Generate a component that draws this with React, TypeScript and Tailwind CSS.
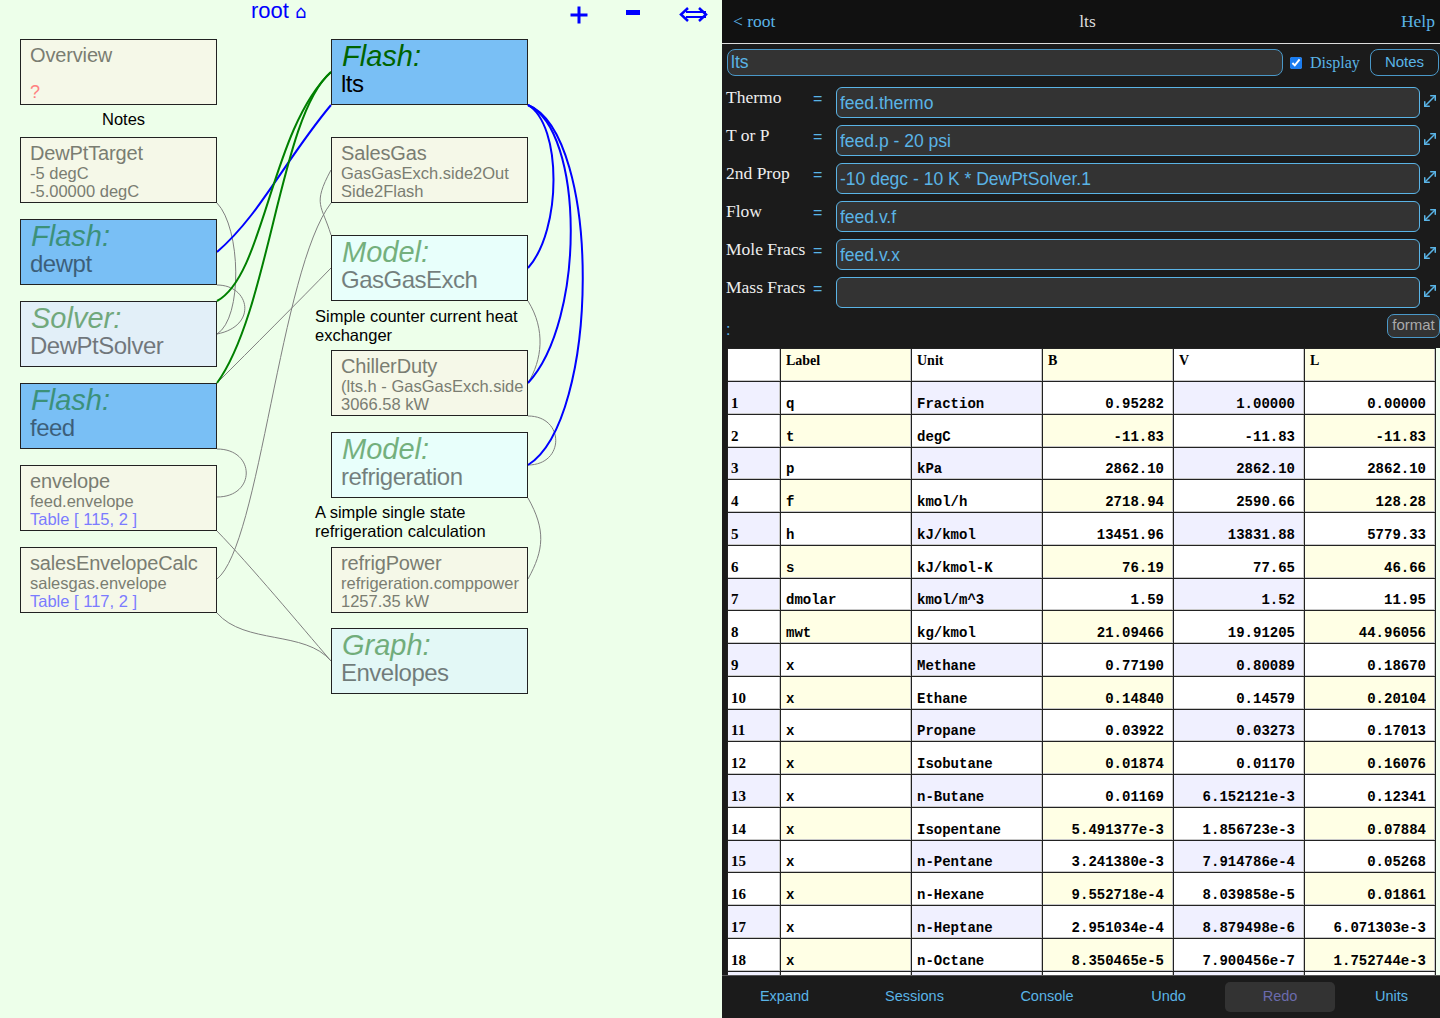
import { MoveDiagonal } from "lucide-react";

const sans = "font-['Liberation_Sans',Arial,sans-serif]";

type Kind = "note" | "flash" | "solver" | "model" | "graph";

const kindBg: Record<Kind, string> = {
  note: "bg-[#f5f8e8]",
  flash: "bg-[#79bff5]",
  solver: "bg-[#e2eff8]",
  model: "bg-[#e8fffb]",
  graph: "bg-[#e3f8f6]",
};

const expressionNodes = [
  { pos: "left-[20px] top-[137px]", name: "DewPtTarget", lines: ["-5 degC", "-5.00000 degC"] },
  { pos: "left-[20px] top-[465px]", name: "envelope", lines: ["feed.envelope"], table: "Table [ 115, 2 ]" },
  { pos: "left-[20px] top-[547px]", name: "salesEnvelopeCalc", lines: ["salesgas.envelope"], table: "Table [ 117, 2 ]" },
  { pos: "left-[331px] top-[137px]", name: "SalesGas", lines: ["GasGasExch.side2Out", "Side2Flash"] },
  { pos: "left-[331px] top-[350px]", name: "ChillerDuty", lines: ["(lts.h - GasGasExch.side", "3066.58 kW"] },
  { pos: "left-[331px] top-[547px]", name: "refrigPower", lines: ["refrigeration.comppower", "1257.35 kW"] },
];

const toolNodes: { pos: string; kind: Kind; label: string; name: string; selected?: boolean }[] = [
  { pos: "left-[20px] top-[219px]", kind: "flash", label: "Flash:", name: "dewpt" },
  { pos: "left-[20px] top-[301px]", kind: "solver", label: "Solver:", name: "DewPtSolver" },
  { pos: "left-[20px] top-[383px]", kind: "flash", label: "Flash:", name: "feed" },
  { pos: "left-[331px] top-[39px]", kind: "flash", label: "Flash:", name: "lts", selected: true },
  { pos: "left-[331px] top-[235px]", kind: "model", label: "Model:", name: "GasGasExch" },
  { pos: "left-[331px] top-[432px]", kind: "model", label: "Model:", name: "refrigeration" },
  { pos: "left-[331px] top-[628px]", kind: "graph", label: "Graph:", name: "Envelopes" },
];

const greyWires = [
  "M217 203 C241 228 243 318 217 334",
  "M217 285 C250 285 258 326 217 334",
  "M217 449 C256 449 256 497 217 497",
  "M217 531 C250 565 300 625 331 661",
  "M217 613 C245 645 305 630 331 661",
  "M217 579 C260 545 280 270 331 203",
  "M217 383 C250 350 300 300 331 268",
  "M331 170 C312 205 322 205 331 235",
  "M528 301 C546 330 542 360 528 383",
  "M528 416 C565 416 565 465 528 465",
  "M528 498 C546 530 544 550 528 579",
];

const props = [
  { label: "Thermo", value: "feed.thermo" },
  { label: "T or P", value: "feed.p - 20 psi" },
  { label: "2nd Prop", value: "-10 degc - 10 K * DewPtSolver.1" },
  { label: "Flow", value: "feed.v.f" },
  { label: "Mole Fracs", value: "feed.v.x" },
  { label: "Mass Fracs", value: "" },
];

const rows = [
  ["q", "Fraction", "0.95282", "1.00000", "0.00000"],
  ["t", "degC", "-11.83", "-11.83", "-11.83"],
  ["p", "kPa", "2862.10", "2862.10", "2862.10"],
  ["f", "kmol/h", "2718.94", "2590.66", "128.28"],
  ["h", "kJ/kmol", "13451.96", "13831.88", "5779.33"],
  ["s", "kJ/kmol-K", "76.19", "77.65", "46.66"],
  ["dmolar", "kmol/m^3", "1.59", "1.52", "11.95"],
  ["mwt", "kg/kmol", "21.09466", "19.91205", "44.96056"],
  ["x", "Methane", "0.77190", "0.80089", "0.18670"],
  ["x", "Ethane", "0.14840", "0.14579", "0.20104"],
  ["x", "Propane", "0.03922", "0.03273", "0.17013"],
  ["x", "Isobutane", "0.01874", "0.01170", "0.16076"],
  ["x", "n-Butane", "0.01169", "6.152121e-3", "0.12341"],
  ["x", "Isopentane", "5.491377e-3", "1.856723e-3", "0.07884"],
  ["x", "n-Pentane", "3.241380e-3", "7.914786e-4", "0.05268"],
  ["x", "n-Hexane", "9.552718e-4", "8.039858e-5", "0.01861"],
  ["x", "n-Heptane", "2.951034e-4", "8.879498e-6", "6.071303e-3"],
  ["x", "n-Octane", "8.350465e-5", "7.900456e-7", "1.752744e-3"],
  ["", "", "", "", ""],
];

const Node = ({ pos, bg, children }: { pos: string; bg: string; children: React.ReactNode }) => (
  <div className={`absolute ${pos} ${bg} h-[66px] w-[197px] overflow-hidden border border-[#222] pl-[9px] whitespace-nowrap ${sans}`}>
    {children}
  </div>
);

const Diagram = () => (
  <div className={`relative h-full w-[722px] shrink-0 overflow-hidden bg-[#edffea] ${sans}`}>
    <div className="absolute left-[251px] top-[1px] text-[22px] leading-[20px] text-[#0000ff]">
      root <span className="font-['DejaVu_Sans'] text-[18px]">⌂</span>
    </div>
    <svg className="absolute left-[566px] top-[2px]" width="146" height="26" viewBox="0 0 146 26" fill="none" stroke="#0000ff">
      <path d="M13 4.5v17M4.5 13h17" strokeWidth="3" />
      <path d="M60 10.500h14" strokeWidth="5" />
      <path d="M120 10h20M120 15h20" strokeWidth="2" />
      <path d="M122 6l-7 6.500 7 6.500M133 6l7 6.500-7 6.500" strokeWidth="2.500" />
    </svg>

    <svg className="absolute left-0 top-0" width="722" height="1018" fill="none">
      {greyWires.map((d) => (
        <path key={d} d={d} stroke="#808080" strokeWidth="1" />
      ))}
      <path d="M217 252 C260 215 285 160 331 105" stroke="#0000ff" strokeWidth="2" />
      <path d="M217 301 C265 275 270 130 331 72" stroke="#008000" strokeWidth="2" />
      <path d="M217 383 C270 310 280 115 331 72" stroke="#008000" strokeWidth="2" />
      <path d="M528 105 C562 125 562 230 528 268" stroke="#0000ff" strokeWidth="2" />
      <path d="M528 105 C584 130 586 320 528 383" stroke="#0000ff" strokeWidth="2" />
      <path d="M528 105 C602 135 600 420 528 465" stroke="#0000ff" strokeWidth="2" />
    </svg>

    <Node pos="left-[20px] top-[39px]" bg={kindBg.note}>
      <div className="mt-[3px] text-[20px] leading-[24px] tracking-[-0.15px] text-[#7a7d72]">Overview</div>
      <div className="mt-[15px] text-[18px] leading-[20px] text-[#ff8080]">?</div>
    </Node>
    <div className="absolute left-[102px] top-[109px] text-[16.500px] leading-[20px] text-black">Notes</div>

    {expressionNodes.map((n) => (
      <Node key={n.name} pos={n.pos} bg={kindBg.note}>
        <div className="mt-[6px] text-[20px] leading-[19.500px] tracking-[-0.15px] text-[#7a7d72]">{n.name}</div>
        {n.lines.map((l) => (
          <div key={l} className="text-[16.500px] leading-[18px] text-[#7a7d72]">{l}</div>
        ))}
        {n.table && <div className="text-[16.500px] leading-[18px] text-[#7b7bff]">{n.table}</div>}
      </Node>
    ))}

    {toolNodes.map((n) => (
      <Node key={n.name} pos={n.pos} bg={kindBg[n.kind]}>
        <div className={n.selected ? "" : "opacity-50"}>
          <div className="mt-[-1px] pl-[1px] text-[29px] italic leading-[34px] text-[#006400]">{n.label}</div>
          <div className="mt-[-3px] text-[24px] leading-[28px] tracking-[-0.5px] text-black">{n.name}</div>
        </div>
      </Node>
    ))}

    <div className="absolute left-[315px] top-[307px] w-[215px] text-[16.500px] leading-[19px] text-black">
      Simple counter current heat exchanger
    </div>
    <div className="absolute left-[315px] top-[503px] w-[215px] text-[16.500px] leading-[19px] text-black">
      A simple single state refrigeration calculation
    </div>
  </div>
);

const Cell = ({ shade, className, children }: { shade: string; className: string; children?: React.ReactNode }) => (
  <div className={`${shade} ${className} flex items-end overflow-hidden border-r border-[#222] shadow-[inset_-1px_-1px_0_#c8c8c8]`}>
    {children}
  </div>
);

const Table = () => {
  const lav = "bg-[#f0f0ff]";
  const wht = "bg-white";
  const yel = "bg-[#ffffe5]";
  const head = "font-['Liberation_Serif',serif] text-[14px] font-bold text-black items-start pt-[1px] pl-[5px]";
  const num = "font-['Liberation_Mono',monospace] text-[14px] leading-[16px] font-bold text-black justify-end pr-[9px] pb-[2px]";
  const txt = "font-['Liberation_Mono',monospace] text-[14px] leading-[16px] font-bold text-black pl-[5px] pb-[2px]";
  const idx = "font-['Liberation_Serif',serif] text-[15px] leading-[16px] font-bold text-black pl-[3px] pb-[3px]";
  return (
    <div className="min-h-0 flex-1 overflow-hidden pl-[5px]">
      <div className="h-full overflow-hidden bg-[#f0fff0]">
        <div className="w-[709px] border-l border-t border-[#222]">
          <div className="grid h-[32px] grid-cols-[53px_131px_131px_131px_131px_131px]">
            <Cell shade={wht} className={head} />
            <Cell shade={yel} className={head}>Label</Cell>
            <Cell shade={wht} className={head}>Unit</Cell>
            <Cell shade={yel} className={head}>B</Cell>
            <Cell shade={wht} className={head}>V</Cell>
            <Cell shade={yel} className={head}>L</Cell>
          </div>
          {rows.map((r, i) => {
            const a = i % 2 === 0 ? lav : wht;
            const b = i % 2 === 0 ? wht : yel;
            return (
              <div key={i} className="grid h-[32.750px] grid-cols-[53px_131px_131px_131px_131px_131px] border-t border-[#222]">
                <Cell shade={a} className={idx}>{r[0] ? i + 1 : ""}</Cell>
                <Cell shade={b} className={txt}>{r[0]}</Cell>
                <Cell shade={a} className={txt}>{r[1]}</Cell>
                <Cell shade={b} className={num}>{r[2]}</Cell>
                <Cell shade={a} className={num}>{r[3]}</Cell>
                <Cell shade={b} className={num}>{r[4]}</Cell>
              </div>
            );
          })}
        </div>
      </div>
    </div>
  );
};

const Detail = () => (
  <div className="flex h-full min-w-0 flex-1 flex-col bg-[#1b1b1b]">
    <div className="flex h-[44px] shrink-0 items-center justify-between border-b border-[#ddd] bg-[#111] pl-[11px] pr-[5px] font-['Liberation_Serif',serif] text-[17.500px] text-[#5ab4e6]">
      <span className="w-[107px]">&lt; root</span>
      <span className="text-[#ddd]">lts</span>
      <span className="w-[100px] text-right">Help</span>
    </div>

    <div className="flex h-[37px] shrink-0 items-center pl-[5px] font-['Liberation_Serif',serif] text-[16px] text-[#5ab4e6]">
      <input
        readOnly
        value="lts"
        className={`h-[27px] w-[556px] rounded-[8px] border border-[#4a98c8] bg-[#333] pl-[3px] text-[17.500px] text-[#5ab4e6] ${sans}`}
      />
      <input readOnly checked type="checkbox" className="ml-[7px] mt-[1px] h-[12px] w-[12px] accent-[#1a7cf0]" />
      <span className="ml-[8px] mt-[1px] w-[60px]">Display</span>
      <button className={`h-[27px] w-[69px] rounded-[8px] border border-[#4a98c8] pb-[1px] text-[15px] ${sans}`}>Notes</button>
    </div>

    <div className="flex shrink-0 flex-col gap-[7px] pt-[6px]">
      {props.map((p) => (
        <div key={p.label} className="flex h-[31px] items-start pl-[4px]">
          <span className="w-[87px] font-['Liberation_Serif',serif] text-[17.500px] leading-[21px] text-[#eee]">{p.label}</span>
          <span className={`w-[23px] pt-[1px] text-[16px] leading-[22px] text-[#5ab4e6] ${sans}`}>=</span>
          <input
            readOnly
            value={p.value}
            className={`h-[31px] w-[584px] rounded-[6px] border border-[#5ab4e6] bg-[#333] pl-[3px] pt-[2px] text-[17.500px] text-[#5ab4e6] ${sans}`}
          />
          <MoveDiagonal size={18} strokeWidth={2} className="ml-[1px] mt-[5px] text-[#5ab4e6]" />
        </div>
      ))}
    </div>

    <div className="flex h-[40px] shrink-0 items-start justify-between pl-[4px] pt-[6px] text-[#5ab4e6]">
      <span className={`mt-[4px] text-[16px] leading-[24px] ${sans}`}>:</span>
      <button className={`h-[24px] w-[53px] rounded-[7px] border border-[#4a98c8] bg-[#333] pb-[2px] text-[15px] leading-[20px] text-[#aaa] ${sans}`}>format</button>
    </div>

    <Table />

    <div className={`grid h-[43px] shrink-0 grid-cols-[125px_135px_130px_113px_110px_105px] items-center border-t border-[#555] text-[14.500px] text-[#5ab4e6] ${sans}`}>
      <span className="text-center">Expand</span>
      <span className="text-center">Sessions</span>
      <span className="text-center">Console</span>
      <span className="text-center">Undo</span>
      <span className="flex h-[30px] items-center justify-center rounded-[5px] bg-[#333] text-[#6b6bac]">Redo</span>
      <span className="pl-[8px] text-center">Units</span>
    </div>
  </div>
);

export default function App() {
  return (
    <div className="flex h-[1018px] w-[1440px] overflow-hidden">
      <Diagram />
      <Detail />
    </div>
  );
}
